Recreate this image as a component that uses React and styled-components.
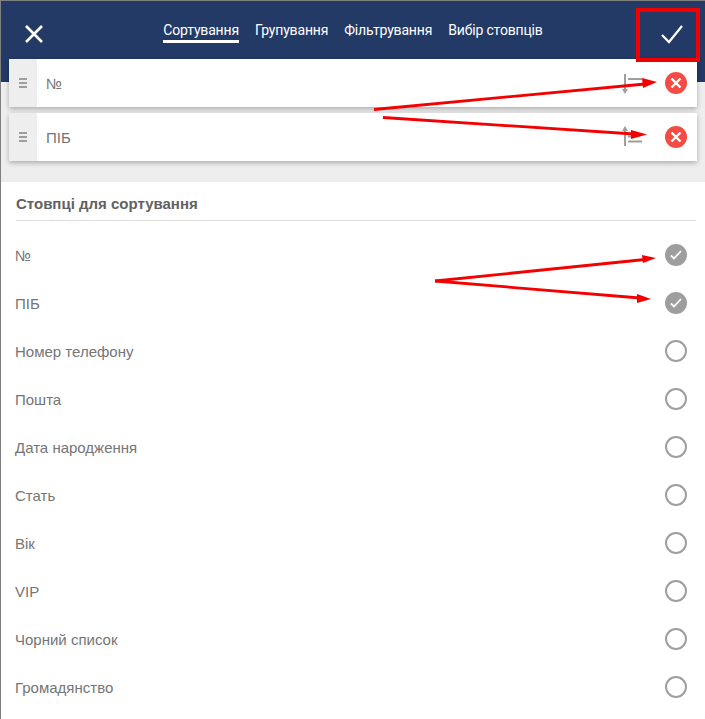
import React from "react";
import styled, { createGlobalStyle } from "styled-components";

const columns = [
  { label: "№", on: true },
  { label: "ПІБ", on: true },
  { label: "Номер телефону" },
  { label: "Пошта" },
  { label: "Дата народження" },
  { label: "Стать" },
  { label: "Вік" },
  { label: "VIP" },
  { label: "Чорний список" },
  { label: "Громадянство" },
];

const Global = createGlobalStyle`
  html, body {
    margin: 0;
    padding: 0;
    background: #fff;
    height: 100%;
    overflow: hidden;
  }
  * {
    box-sizing: border-box;
  }
`;

const Page = styled.div`
  position: relative;
  width: 705px;
  height: 719px;
  overflow: hidden;
  background: #fff;
  border-top: 1px solid #808080;
  border-left: 1px solid #808080;
  font-family: "Liberation Sans", Arial, sans-serif;
`;

const Header = styled.div`
  display: flex;
  align-items: flex-start;
  height: 58px;
  background: #233a66;
`;

const IconBtn = styled.div`
  display: flex;
  align-items: center;
  justify-content: center;
  width: 66px;
  height: 58px;
  padding-top: 8px;
  flex: none;
`;

const Tabs = styled.div`
  flex: 1;
  display: flex;
  justify-content: center;
  gap: 16px;
  padding-top: 20px;
`;

const Tab = styled.div`
  height: 22px;
  font-family: Roboto, "Liberation Sans", sans-serif;
  font-size: 14px;
  line-height: 18px;
  letter-spacing: -0.17px;
  color: #fff;
  border-bottom: ${(p) => (p.$active ? "3px solid #fff" : "none")};
`;

const Band = styled.div`
  display: flex;
  flex-direction: column;
  gap: 6px;
  height: 123px;
  padding: 0 8px;
  background: linear-gradient(#233a66 23px, #eeeeee 23px);
`;

const Card = styled.div`
  display: flex;
  align-items: center;
  height: 48px;
  background: #fff;
  box-shadow: 0 2px 5px rgba(0, 0, 0, 0.28);
`;

const Handle = styled.div`
  display: flex;
  flex-direction: column;
  align-items: center;
  justify-content: center;
  gap: 2px;
  width: 28px;
  height: 100%;
  background: #eeeeee;
  flex: none;

  & > span {
    display: block;
    width: 8px;
    height: 2px;
    background: #9e9e9e;
  }
`;

const CardName = styled.div`
  flex: 1;
  padding-left: 9px;
  font-size: 15px;
  color: #757575;
`;

const SortIcon = styled.svg`
  width: 22px;
  height: 24px;
  margin-right: 21px;
  flex: none;
`;

const RemoveIcon = styled.svg`
  width: 22px;
  height: 22px;
  margin-right: 10px;
  flex: none;
`;

const Section = styled.div`
  padding: 0 9px 0 15px;
`;

const Title = styled.div`
  height: 39px;
  padding-top: 14px;
  font-size: 15px;
  font-weight: 700;
  line-height: 16px;
  color: #616161;
  border-bottom: 1px solid #dddddd;
`;

const List = styled.div`
  margin-left: -1px;
  padding: 10px 9px 0 0;
`;

const Row = styled.div`
  display: flex;
  align-items: center;
  justify-content: space-between;
  height: 48px;
  font-size: 15px;
  color: #757575;
`;

const Radio = styled.div`
  display: flex;
  align-items: center;
  justify-content: center;
  width: 22px;
  height: 22px;
  border-radius: 50%;
  border: 2px solid #9e9e9e;
  background: ${(p) => (p.$on ? "#9e9e9e" : "#fff")};
`;

const RedBox = styled.div`
  position: absolute;
  top: 7px;
  left: 635px;
  width: 64px;
  height: 54px;
  border: 4px solid #f00000;
`;

const Arrows = styled.svg`
  position: absolute;
  top: -1px;
  left: -1px;
  width: 705px;
  height: 719px;
  pointer-events: none;
`;

const SortGlyph = ({ up }) => (
  <SortIcon viewBox="0 0 22 24">
    {up ? (
      <>
        <path d="M3 3v18" stroke="#9e9e9e" strokeWidth="2" fill="none" />
        <path d="M0 6l3-5 3 5z" fill="#9e9e9e" />
        <path d="M6 11.5h7M6 16.5h14" stroke="#9e9e9e" strokeWidth="2" fill="none" />
      </>
    ) : (
      <>
        <path d="M3 3v18" stroke="#9e9e9e" strokeWidth="2" fill="none" />
        <path d="M0 18l3 5 3-5z" fill="#9e9e9e" />
        <path d="M6 8h14M6 14h7" stroke="#9e9e9e" strokeWidth="2" fill="none" />
      </>
    )}
  </SortIcon>
);

const Remove = () => (
  <RemoveIcon viewBox="0 0 22 22">
    <circle cx="11" cy="11" r="11" fill="#f44c45" />
    <path d="M6.5 6.5l9 9M15.5 6.5l-9 9" stroke="#fff" strokeWidth="2.4" fill="none" />
  </RemoveIcon>
);

const Arrow = ({ d, head }) => (
  <>
    <path d={d} stroke="#f40000" strokeWidth="2.8" fill="none" />
    <polygon points={head} fill="#f40000" />
  </>
);

const App = () => {
  return (
    <Page>
      <Global />
      <Header>
        <IconBtn>
          <svg width="20" height="20" viewBox="0 0 20 20">
            <path d="M2 2l16 16M18 2L2 18" stroke="#fff" strokeWidth="2.6" fill="none" />
          </svg>
        </IconBtn>
        <Tabs>
          <Tab $active>Сортування</Tab>
          <Tab>Групування</Tab>
          <Tab>Фільтрування</Tab>
          <Tab>Вибір стовпців</Tab>
        </Tabs>
        <IconBtn>
          <svg width="24" height="20" viewBox="0 0 24 20">
            <path d="M2 11l7 7L22 2" stroke="#fff" strokeWidth="2.2" fill="none" />
          </svg>
        </IconBtn>
      </Header>
      <Band>
        <Card>
          <Handle>
            <span />
            <span />
            <span />
          </Handle>
          <CardName>№</CardName>
          <SortGlyph />
          <Remove />
        </Card>
        <Card>
          <Handle>
            <span />
            <span />
            <span />
          </Handle>
          <CardName>ПІБ</CardName>
          <SortGlyph up />
          <Remove />
        </Card>
      </Band>
      <Section>
        <Title>Стовпці для сортування</Title>
        <List>
          {columns.map((col) => (
            <Row key={col.label}>
              {col.label}
              <Radio $on={col.on}>
                {col.on && (
                  <svg width="12" height="10" viewBox="0 0 12 10">
                    <path d="M1 5.5l3 3L11 1" stroke="#fff" strokeWidth="1.8" fill="none" />
                  </svg>
                )}
              </Radio>
            </Row>
          ))}
        </List>
      </Section>
      <RedBox />
      <Arrows viewBox="0 0 705 719">
        <Arrow d="M374 109.5L645 84" head="642,78 657,82 643,88" />
        <Arrow d="M383 117.5L634 134" head="631,130 647,134.5 631,139" />
        <Arrow d="M435 281L645 259.5" head="642,255 656,258 643,263" />
        <Arrow d="M435 281L640 298" head="637,294 651,299 637,303" />
      </Arrows>
    </Page>
  );
};

export default App;
